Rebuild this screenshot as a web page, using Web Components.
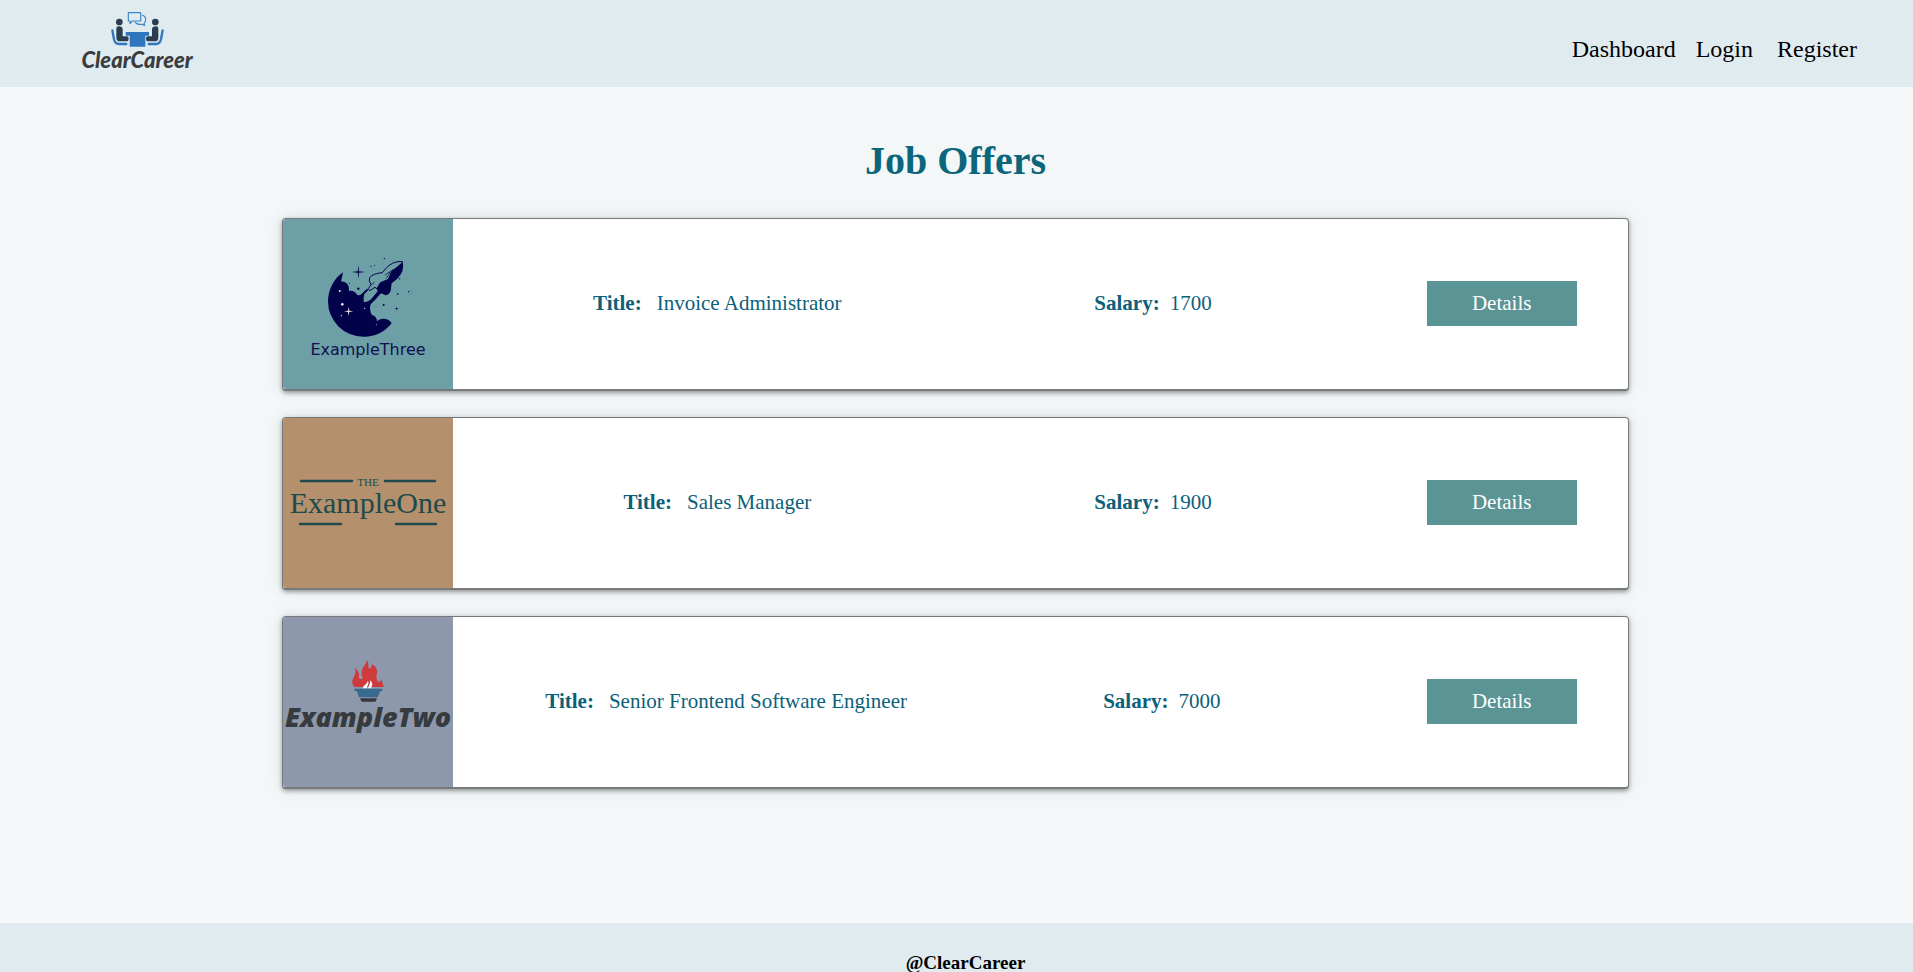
<!DOCTYPE html>
<html lang="en">
<head>
<meta charset="utf-8">
<title>ClearCareer</title>
<style>
  body { margin: 0; background: #f3f7f8; font-family: "Liberation Serif", "Times New Roman", serif; }
</style>
</head>
<body>
<cc-app>
  <cc-header slot="header"></cc-header>
  <cc-offer heading="Invoice Administrator" salary="1700"><cc-logo-three></cc-logo-three></cc-offer>
  <cc-offer heading="Sales Manager" salary="1900"><cc-logo-one></cc-logo-one></cc-offer>
  <cc-offer heading="Senior Frontend Software Engineer" salary="7000"><cc-logo-two></cc-logo-two></cc-offer>
  <cc-footer slot="footer">@ClearCareer</cc-footer>
</cc-app>

<template id="app">
  <style>
    :host { display: flex; flex-direction: column; min-height: 100vh; }
    main { flex: 1; padding: 51px 16px 40px 14px; }
    h1 { margin: 0 0 34px; font-size: 40px; line-height: 46px; text-align: center; color: #0b667c; }
    .offers { display: flex; flex-direction: column; gap: 26px; width: 71.5%; margin: 0 auto; }
  </style>
  <slot name="header"></slot>
  <main>
    <h1>Job Offers</h1>
    <section class="offers"><slot></slot></section>
  </main>
  <slot name="footer"></slot>
</template>

<template id="header">
  <style>
    :host { display: block; background: #e0ebf0; }
    header { display: flex; justify-content: space-between; align-items: center; padding: 8px 56px 11px 82px; }
    .brand { display: block; }
    svg { display: block; }
    nav { display: flex; gap: 20px; padding-top: 14px; font-size: 24px; line-height: 28px; }
    .guest { display: flex; gap: 24px; }
    nav a { color: #000; text-decoration: none; }
  </style>
  <header>
    <a class="brand" href="#" aria-label="ClearCareer home">
      <svg width="112" height="68" viewBox="0 0 112 68">
        <g transform="translate(-22 -8) scale(.33333)">
          <g fill="#2b3e50">
            <circle cx="178" cy="66" r="10"/>
            <circle cx="286" cy="66" r="10"/>
            <path d="M169 86q0-7 8-7 10 0 11 8v22h13q5 0 5 7 0 8-6 8h-20q-11 0-11-11z"/>
            <path d="M295 86q0-7-8-7-10 0-11 8v22h-13q-5 0-5 7 0 8 6 8h20q11 0 11-11z"/>
          </g>
          <g fill="none" stroke="#2f76be" stroke-width="7" stroke-linecap="round">
            <path d="M157 91l5 27q3 14 15 14h22"/>
            <path d="M308 91l-5 27q-3 14-15 14h-22"/>
          </g>
          <path d="M197 96h70v11h-11v33h-47v-33h-12z" fill="#2f76be"/>
          <g fill="none" stroke="#3d86c8" stroke-width="3.5" stroke-linejoin="round">
            <path d="M205 38h37v25h-25l-7 8v-8h-5z"/>
            <path d="M246 45q11 3 11 14 0 7-5 11l2 6-9-3q-15 2-20-8"/>
          </g>
        </g>
        <text x="55" y="60" text-anchor="middle" font-family="Lato, sans-serif" font-size="22" font-weight="900" font-style="italic" fill="#3a3d3e">ClearCareer</text>
      </svg>
    </a>
    <nav>
      <a href="#">Dashboard</a>
      <div class="guest"><a href="#">Login</a><a href="#">Register</a></div>
    </nav>
  </header>
</template>

<template id="offer">
  <style>
    :host { display: block; }
    article { display: flex; background: #fff; border: 1px solid #77797a; border-bottom-width: 2px; border-radius: 4px;
      box-shadow: 0 2px 4px rgba(0,0,0,.35), 0 0 14px rgba(60,90,100,.16); color: #0b607a; font-size: 21px; line-height: 24px; }
    .logo { flex: none; width: 170px; height: 170px; border-radius: 3px 0 0 3px; overflow: hidden; }
    .info { flex: 1; display: flex; align-items: center; justify-content: space-between; padding: 0 51px 2px 92px; }
    p { margin: 0; display: flex; }
    .title { min-width: 344px; justify-content: center; gap: 15px; }
    .salary { gap: 10px; padding-right: 10px; }
    button { width: 150px; height: 45px; padding: 0; border: 0; background: #5b9494; color: #fff; font: inherit; cursor: pointer; }
  </style>
  <article>
    <div class="logo"><slot></slot></div>
    <div class="info">
      <p class="title"><strong>Title:</strong><span id="title"></span></p>
      <p class="salary"><strong>Salary:</strong><span id="salary"></span></p>
      <button type="button">Details</button>
    </div>
  </article>
</template>

<template id="footer">
  <style>
    :host { display: block; background: #e0ebf0; }
    footer { padding: 31px 0 0 18px; text-align: center; font-size: 19px; line-height: 18px; font-weight: bold; color: #000; }
  </style>
  <footer><slot></slot></footer>
</template>

<template id="logo-three">
  <style>:host, svg { display: block; } :host { background: #6d9fa6; }</style>
  <svg width="170" height="170" viewBox="0 0 170 170">
    <g transform="translate(-8 -9) scale(.33333)">
      <path fill="#02024a" d="M204 187A106 106 0 0 0 159 275A106 106 0 0 0 265 380A106 106 0 0 0 350 340Q343 325 322 326 310 328 306 334 306 319 290 314 282 298 287 283L300 270 318 250 332 256Q342 254 347 243L350 220Q374 204 382 184 387 168 383 156L372 164Q360 168 352 182L340 208 318 216 300 240 280 256 266 262 268 252 280 240 276 236 262 250Q254 259 246 254 238 240 222 243 224 216 198 214 202 200 204 187z"/>
      <path fill="#6d9fa6" d="M266 262L290 246 304 234 308 244 288 268Q276 278 266 275z"/>
      <path fill="#6d9fa6" stroke="#02024a" stroke-width="3" stroke-linejoin="round" d="M280 236L288 224Q280 212 284 203 292 191 322 188 342 160 364 156 376 153 384 156L366 172 352 182 340 208 316 218 306 236 300 232 284 242z"/>
      <path fill="none" stroke="#02024a" stroke-width="2" d="M330 196l12-9 12-2-12 8-8 12M288 224l10-6M354 178l-14 12"/>
      <path fill="#02024a" d="M250 165l2 19 19 2-19 2-2 19-2-19-19-2 19-2zM365 289l1 6 6 1-6 1-1 6-1-6-6-1 6-1z"/>
      <g fill="#02024a"><circle cx="250" cy="236" r="3.5"/><circle cx="328" cy="146" r="2"/><circle cx="288" cy="169" r="2"/><circle cx="299" cy="166" r="1.5"/><circle cx="223" cy="220" r="1.5"/><circle cx="374" cy="206" r="2"/><circle cx="368" cy="252" r="2.5"/><circle cx="326" cy="285" r="3"/><circle cx="401" cy="245" r="2"/><circle cx="408" cy="240" r="1"/><circle cx="408" cy="250" r="1"/><circle cx="303" cy="290" r="1"/></g>
      <g fill="#f1dfd8"><circle cx="194" cy="243" r="3"/><circle cx="202" cy="283" r="4"/><circle cx="199" cy="317" r="2"/><circle cx="269" cy="295" r="2"/><circle cx="304" cy="344" r="1.5"/><path d="M221 290l2 12 12 2-12 2-2 12-2-12-12-2 12-2z"/></g>
    </g>
    <text x="85" y="136" text-anchor="middle" font-family="DejaVu Sans, sans-serif" font-size="16" fill="#10104e">ExampleThree</text>
  </svg>
</template>

<template id="logo-one">
  <style>:host, svg { display: block; } :host { background: #b5906c; }</style>
  <svg width="170" height="170" viewBox="0 0 170 170">
    <path d="M18 63h51M102 63h50M17 106h41M113 106h40" fill="none" stroke="#204a4b" stroke-width="2.4" stroke-linecap="round"/>
    <text x="85" y="68" text-anchor="middle" font-family="Liberation Serif, serif" font-size="11" fill="#204a4b">THE</text>
    <text x="85" y="95" text-anchor="middle" font-family="Liberation Serif, serif" font-size="30" fill="#204a4b">ExampleOne</text>
  </svg>
</template>

<template id="logo-two">
  <style>:host, svg { display: block; } :host { background: #8e98ad; }</style>
  <svg width="170" height="170" viewBox="0 0 170 170">
    <g transform="translate(-8 -7) scale(.33333)">
      <path fill="#cf3a3c" d="M238 231C229 220 231 209 238 198 243 189 242 181 239 173 250 181 253 191 252 203 254 209 260 208 264 203 260 199 259 192 260 186 262 168 275 164 276 149 282 158 280 166 280 172 282 179 290 178 290 163 302 168 308 178 306 189 303 201 304 212 311 216 316 216 318 212 318 207 323 214 322 223 327 231z"/>
      <path fill="#fff" d="M264 235q0-8 8-12 5-3 6-11 5 5 1 13-4 5-3 10zM280 235q-1-6 4-12 3-5 0-12 8 4 8 12-1 6-4 12z"/>
      <path fill="#38698f" d="M238 236h84v7h-6l-8 19h-56l-7-19h-7z"/>
      <path fill="#33383c" d="M255 265h51l-5 10h-41z"/>
    </g>
    <text x="85" y="110" text-anchor="middle" font-family="Open Sans, sans-serif" font-size="27" font-weight="800" font-style="italic" fill="#363b3e">ExampleTwo</text>
  </svg>
</template>

<script>
  class TemplateElement extends HTMLElement {
    constructor() {
      super();
      const template = document.getElementById(this.constructor.template);
      this.attachShadow({ mode: "open" }).append(template.content.cloneNode(true));
    }
  }
  class App extends TemplateElement { static template = "app"; }
  class Header extends TemplateElement { static template = "header"; }
  class Footer extends TemplateElement { static template = "footer"; }
  class LogoOne extends TemplateElement { static template = "logo-one"; }
  class LogoTwo extends TemplateElement { static template = "logo-two"; }
  class LogoThree extends TemplateElement { static template = "logo-three"; }
  class Offer extends TemplateElement {
    static template = "offer";
    connectedCallback() {
      this.shadowRoot.getElementById("title").textContent = this.getAttribute("heading");
      this.shadowRoot.getElementById("salary").textContent = this.getAttribute("salary");
    }
  }
  customElements.define("cc-app", App);
  customElements.define("cc-header", Header);
  customElements.define("cc-footer", Footer);
  customElements.define("cc-offer", Offer);
  customElements.define("cc-logo-one", LogoOne);
  customElements.define("cc-logo-two", LogoTwo);
  customElements.define("cc-logo-three", LogoThree);
</script>
</body>
</html>
